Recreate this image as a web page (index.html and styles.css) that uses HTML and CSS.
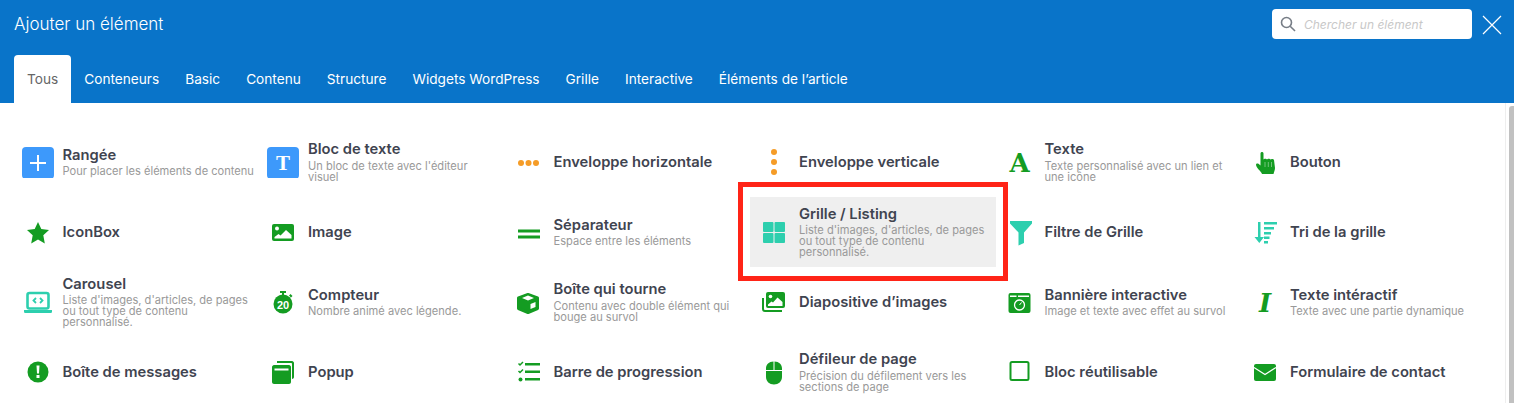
FILE: index.html
```html
<!DOCTYPE html>
<html lang="fr">
<head>
    <meta charset="UTF-8">
    <meta name="viewport" content="width=device-width, initial-scale=1.0">
    <title>Ajouter un élément</title>
    <link rel="stylesheet" href="styles.css">
</head>
<body>
    <div class="modal">
        <header class="modal-head">
            <div class="head-top">
                <h1>Ajouter un élément</h1>
                <div class="search">
                    <svg class="search-icon" viewBox="0 0 16 16"><circle cx="6.500" cy="6.500" r="5" /><path d="M10.200 10.200 15 15" /></svg>
                    <span class="search-text">Chercher un élément</span>
                </div>
                <svg class="close" viewBox="0 0 20 20"><path d="M1 1 19 19M19 1 1 19" /></svg>
            </div>
            <nav class="tabs">
                <a class="tab active">Tous</a>
                <a class="tab">Conteneurs</a>
                <a class="tab">Basic</a>
                <a class="tab">Contenu</a>
                <a class="tab">Structure</a>
                <a class="tab">Widgets WordPress</a>
                <a class="tab">Grille</a>
                <a class="tab">Interactive</a>
                <a class="tab">Éléments de l’article</a>
            </nav>
        </header>

        <main class="body">
            <div class="grid">
                <div class="item">
                    <svg class="icon" viewBox="0 0 32 32"><rect class="blue" y="1" width="32" height="32" rx="4" /><path class="white-line" d="M16 9v16M8 17h16" /></svg>
                    <div class="info"><h3>Rangée</h3><p>Pour placer les éléments de contenu</p></div>
                </div>
                <div class="item">
                    <svg class="icon" viewBox="0 0 32 32"><rect class="blue" y="1" width="32" height="32" rx="4" /><text class="glyph-t" x="16" y="24">T</text></svg>
                    <div class="info"><h3>Bloc de texte</h3><p>Un bloc de texte avec l'éditeur<br>visuel</p></div>
                </div>
                <div class="item">
                    <svg class="icon" viewBox="0 0 32 32"><g class="orange"><circle cx="8" cy="17" r="3" /><circle cx="15.500" cy="17" r="3" /><circle cx="23" cy="17" r="3" /></g></svg>
                    <div class="info"><h3>Enveloppe horizontale</h3></div>
                </div>
                <div class="item">
                    <svg class="icon" viewBox="0 0 32 32"><g class="orange"><circle cx="16" cy="6" r="3" /><circle cx="16" cy="16" r="3" /><circle cx="16" cy="26" r="3" /></g></svg>
                    <div class="info"><h3>Enveloppe verticale</h3></div>
                </div>
                <div class="item">
                    <svg class="icon" viewBox="0 0 32 32"><text class="glyph-a" x="15.500" y="26">A</text></svg>
                    <div class="info"><h3>Texte</h3><p>Texte personnalisé avec un lien et<br>une icône</p></div>
                </div>
                <div class="item">
                    <svg class="icon" viewBox="0 0 32 32"><path class="green" d="M11.500 7.500c0-2 3-2 3 0V13.500c.5-1 3-1 3.500 0 .5-1 3-1 3.500 0 .5-.8 3-.8 3.500.5L26 22c0 2-1 4-1.500 6H13c-1-3-6-6-6-9.500 0-1 1.500-1.500 2.500-.7l2 1.700z" /><path class="white-hair" d="M16 16v5M19.300 16v5M22.500 16v5" /></svg>
                    <div class="info"><h3>Bouton</h3></div>
                </div>

                <div class="item">
                    <svg class="icon" viewBox="0 0 32 32"><polygon class="green" points="16,6 19.300,13 27,14 21.300,19.300 22.800,27.500 16,23.500 9.200,27.500 10.700,19.300 5,14 12.700,13" /></svg>
                    <div class="info"><h3>IconBox</h3></div>
                </div>
                <div class="item">
                    <svg class="icon" viewBox="0 0 32 32"><rect class="green" x="5" y="8" width="22" height="17" rx="2" /><circle class="white" cx="10" cy="12.500" r="2" /><path class="white" d="M7.500 22.500v-1.500l4-3 2 1.500 5.500-5.500 5.500 5v3.500z" /></svg>
                    <div class="info"><h3>Image</h3></div>
                </div>
                <div class="item">
                    <svg class="icon" viewBox="0 0 32 32"><path class="green" d="M5 13.500h22v3H5zM5 19.500h22v3H5z" /></svg>
                    <div class="info"><h3>Séparateur</h3><p>Espace entre les éléments</p></div>
                </div>
                <div class="item highlighted">
                    <svg class="icon" viewBox="0 0 32 32"><g class="teal"><rect x="5" y="6" width="10.500" height="10" rx="1" /><rect x="16.500" y="6" width="10.500" height="10" rx="1" /><rect x="5" y="17" width="10.500" height="10" rx="1" /><rect x="16.500" y="17" width="10.500" height="10" rx="1" /></g></svg>
                    <div class="info"><h3>Grille / Listing</h3><p>Liste d'images, d'articles, de pages<br>ou tout type de contenu<br>personnalisé.</p></div>
                </div>
                <div class="item">
                    <svg class="icon" viewBox="0 0 32 32"><path class="teal" d="M6 5h22v2.500l-8 9V27l-5.500 2.500V16.500l-8.500-9z" /></svg>
                    <div class="info"><h3>Filtre de Grille</h3></div>
                </div>
                <div class="item">
                    <svg class="icon" viewBox="0 0 32 32"><path class="teal" d="M9 6h2.500v15H15l-4.700 6-4.800-6H9zM15 6h13v2.500H15zM15 11h10v2.500H15zM15 16h7v2.500h-7zM15 25h4v2.500h-4zM15 20.500h5.500V23H15z" /></svg>
                    <div class="info"><h3>Tri de la grille</h3></div>
                </div>

                <div class="item">
                    <svg class="icon" viewBox="0 0 32 32"><rect class="teal-frame" x="5.500" y="7" width="21" height="15.500" rx="2" /><path class="teal" d="M2 24h28v1.500c0 1-.7 1.500-1.500 1.500h-25C2.700 27 2 26.500 2 25.500z" /><path class="teal-line" d="M14 12l-2.500 2.500L14 17M18 12l2.500 2.500L18 17" /></svg>
                    <div class="info"><h3>Carousel</h3><p>Liste d'images, d'articles, de pages<br>ou tout type de contenu<br>personnalisé.</p></div>
                </div>
                <div class="item">
                    <svg class="icon" viewBox="0 0 32 32"><path class="green" d="M13 5h6v2h-2v2h-2V7h-2zM22 9.500l1.500-1.500 2 2-1.500 1.500z" /><circle class="green" cx="16" cy="18" r="9.500" /><text class="glyph-num" x="16" y="22.500">20</text></svg>
                    <div class="info"><h3>Compteur</h3><p>Nombre animé avec légende.</p></div>
                </div>
                <div class="item">
                    <svg class="icon" viewBox="0 0 32 32"><path class="green-hex" d="M15 8.500l9.500 3.500v10.500L15 26.500 5.500 22.500V12z" /><path class="white" d="M9 12l6-2.500 6 2.500-6 2.500zM17.500 18l5-2v5l-5 2z" /></svg>
                    <div class="info"><h3>Boîte qui tourne</h3><p>Contenu avec double élément qui<br>bouge au survol</p></div>
                </div>
                <div class="item">
                    <svg class="icon" viewBox="0 0 32 32"><path class="green-line" d="M5 12v11c0 1 1 2 2 2h17" /><rect class="green" x="8" y="6" width="19" height="16" rx="2" /><circle class="white" cx="12.500" cy="10.500" r="1.800" /><path class="white" d="M10 20v-1.500l3.500-3 1.500 1 4.500-5 5 4.500v4z" /></svg>
                    <div class="info"><h3>Diapositive d’images</h3></div>
                </div>
                <div class="item">
                    <svg class="icon" viewBox="0 0 32 32"><rect class="green" x="4.500" y="7" width="22" height="20" rx="2" /><path class="white" d="M6 9.500h6.500V11H6zM14 9.500h11V11H14z" /><circle class="white-ring" cx="15.500" cy="19" r="5" /><path class="white-thin" d="M15.500 19l2-2.500" /></svg>
                    <div class="info"><h3>Bannière interactive</h3><p>Image et texte avec effet au survol</p></div>
                </div>
                <div class="item">
                    <svg class="icon" viewBox="0 0 32 32"><text class="glyph-i" x="16" y="26">I</text></svg>
                    <div class="info"><h3>Texte intéractif</h3><p>Texte avec une partie dynamique</p></div>
                </div>

                <div class="item">
                    <svg class="icon" viewBox="0 0 32 32"><circle class="green" cx="16" cy="16" r="10.500" /><path class="white" d="M14.500 9.500h3l-.5 8h-2zM14.500 19h3v3h-3z" /></svg>
                    <div class="info"><h3>Boîte de messages</h3></div>
                </div>
                <div class="item">
                    <svg class="icon" viewBox="0 0 32 32"><path class="green" d="M10 5h15c1 0 2 1 2 2v14c0 1-1 2-2 2V8c0-.6-.4-1-1-1H10z" /><path class="green" d="M7 9h15c1 0 2 1 2 2v15c0 1-1 2-2 2H7c-1 0-2-1-2-2V11c0-1 1-2 2-2z" /><rect class="white" x="7.500" y="12.500" width="14" height="2" /></svg>
                    <div class="info"><h3>Popup</h3></div>
                </div>
                <div class="item">
                    <svg class="icon" viewBox="0 0 32 32"><path class="green" d="M12 7h15v2.500H12zM12 14.500h15V17H12zM12 22h15v2.500H12z" /><path class="green-thin" d="M5.500 7.500l1.500 1.500 3-3M5.500 15l1.500 1.500 3-3" /><circle class="green" cx="7.500" cy="23.500" r="2" /></svg>
                    <div class="info"><h3>Barre de progression</h3></div>
                </div>
                <div class="item">
                    <svg class="icon" viewBox="0 0 32 32"><path class="green" d="M15.500 5.500v8.500H8v-1.500c0-4 3-7 7.500-7zM16.500 5.500C21 5.500 24 8.500 24 12.500V14h-7.500zM8 15h16v6c0 4.500-3.500 7.500-8 7.500S8 25.500 8 21z" /></svg>
                    <div class="info"><h3>Défileur de page</h3><p>Précision du défilement vers les<br>sections de page</p></div>
                </div>
                <div class="item">
                    <svg class="icon" viewBox="0 0 32 32"><rect class="green-box" x="6.500" y="6" width="18" height="18" rx="1.500" /></svg>
                    <div class="info"><h3>Bloc réutilisable</h3></div>
                </div>
                <div class="item">
                    <svg class="icon" viewBox="0 0 32 32"><rect class="green" x="5" y="8" width="22" height="17" rx="2" /><path class="white-line-thin" d="M5 11.500l11 7 11-7" /></svg>
                    <div class="info"><h3>Formulaire de contact</h3></div>
                </div>
            </div>
            <div class="scrollbar"><div class="thumb"></div></div>
        </main>

        <div class="red-frame"></div>
    </div>
</body>
</html>
```

FILE: styles.css
```css
* {
    box-sizing: border-box;
}
html, body {
    margin: 0;
    height: 100%;
    overflow: hidden;
}
body {
    font-family: 'Inter', 'Liberation Sans', sans-serif;
    background: white;
}
.modal {
    position: relative;
    height: 403px;
    display: flex;
    flex-direction: column;
}

/* header */
.modal-head {
    background-color: #0974c9;
    height: 103px;
    flex: none;
    display: flex;
    flex-direction: column;
}
.head-top {
    height: 55px;
    padding: 9px 12px 0 14px;
    display: flex;
    align-items: flex-start;
}
h1 {
    margin: 0;
    font-size: 17px;
    font-weight: 300;
    line-height: 30px;
    color: white;
}
.search {
    margin-left: auto;
    width: 200px;
    height: 30px;
    background: white;
    border-radius: 4px;
    display: flex;
    align-items: center;
    padding-left: 8px;
    gap: 8px;
}
.search-icon {
    width: 16px;
    height: 16px;
    fill: none;
    stroke: #777d86;
    stroke-width: 1.6;
}
.search-text {
    font-size: 12px;
    font-style: italic;
    color: #c8c8c8;
}
.close {
    width: 20px;
    height: 20px;
    margin: 6px 0 0 10px;
    fill: none;
    stroke: white;
    stroke-width: 1.2;
}
.tabs {
    display: flex;
    padding-left: 14px;
    flex: 1;
}
.tab {
    padding: 0 13px;
    display: flex;
    align-items: center;
    font-size: 13.67px;
    color: white;
}
.tab.active {
    background: white;
    color: #666;
    border-radius: 4px 4px 0 0;
}

/* body */
.body {
    flex: 1;
    display: flex;
    min-height: 0;
    justify-content: space-between;
}
.grid {
    padding: 24px 0 0 13.5px;
    display: grid;
    grid-template-columns: repeat(6, 245.5px);
    grid-auto-rows: 70px;
}
.item {
    display: flex;
    align-items: center;
    padding: 0 0 0 8px;
    gap: 9px;
}
.item.highlighted {
    background: #efefef;
}
.icon {
    width: 32px;
    height: 32px;
    flex: none;
}
.info {
    min-width: 0;
    white-space: nowrap;
}
h3 {
    margin: 0;
    font-size: 14.75px;
    font-weight: 600;
    line-height: 16px;
    color: #3f4450;
}
.info p {
    margin: 3.5px 0 0;
    font-size: 11.1px;
    line-height: 11px;
    color: #999;
}
.scrollbar {
    width: 9px;
    flex: none;
    border-left: 1px solid #eee;
    padding: 3px 0 0 3px;
}
.thumb {
    height: 100%;
    background: #c1c1c1;
    border-radius: 3px 0 0 0;
}

/* red annotation drawn on the screenshot */
.red-frame {
    position: absolute;
    left: 738px;
    top: 182px;
    width: 270px;
    height: 99px;
    border: 5px solid #ff2417;
}

/* icon paints */
.blue { fill: #3d99fb; }
.orange { fill: #f59c27; }
.green { fill: #149c22; }
.teal { fill: #2dcfae; }
.white { fill: white; }
.white-line { fill: none; stroke: white; stroke-width: 2; }
.white-line-thin { fill: none; stroke: white; stroke-width: 1.2; }
.white-thin { fill: none; stroke: white; stroke-width: 1; }
.white-hair { fill: none; stroke: white; stroke-width: .4; }
.white-ring { fill: #149c22; stroke: white; stroke-width: 1.3; }
.teal-line { fill: none; stroke: #2dcfae; stroke-width: 1.8; }
.teal-frame { fill: white; stroke: #2dcfae; stroke-width: 2.6; }
.green-line { fill: none; stroke: #149c22; stroke-width: 2; }
.green-thin { fill: none; stroke: #149c22; stroke-width: 1.5; }
.green-box { fill: none; stroke: #149c22; stroke-width: 2; }
.green-hex { fill: #149c22; stroke: #149c22; stroke-width: 3; stroke-linejoin: round; }
.glyph-t {
    font-family: 'Liberation Serif', serif;
    font-size: 21px;
    font-weight: bold;
    fill: white;
    text-anchor: middle;
}
.glyph-a {
    font-family: 'DejaVu Serif', serif;
    font-size: 26px;
    font-weight: bold;
    fill: #149c22;
    text-anchor: middle;
}
.glyph-i {
    font-family: 'DejaVu Serif', serif;
    font-size: 26px;
    font-weight: bold;
    font-style: italic;
    fill: #149c22;
    text-anchor: middle;
}
.glyph-num {
    font-family: 'Liberation Sans', sans-serif;
    font-size: 11px;
    font-weight: bold;
    fill: white;
    text-anchor: middle;
}
```
